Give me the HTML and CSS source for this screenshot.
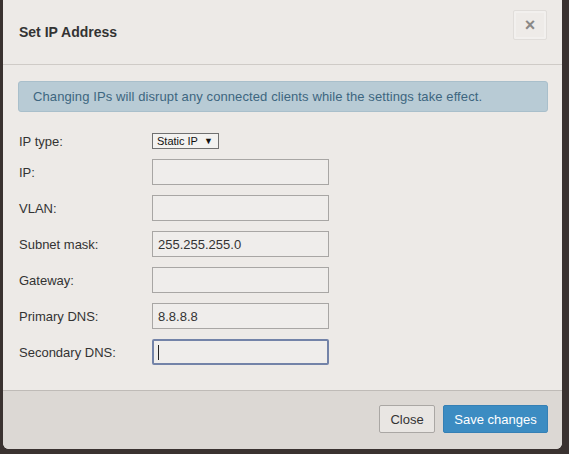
FILE: index.html
```html
<!DOCTYPE html>
<html>
<head>
<meta charset="utf-8">
<link rel="stylesheet" href="styles.css">
</head>
<body>
<div class="modal">
  <div class="modal-header">
    <h3 class="title">Set IP Address</h3>
    <button class="close-x">×</button>
  </div>
  <div class="modal-body">
    <div class="alert">Changing IPs will disrupt any connected clients while the settings take effect.</div>
    <div class="form">
      <label class="lbl">IP type:</label>
      <div class="ctl"><span class="select">Static IP <span class="arrow">▼</span></span></div>
      <label class="lbl">IP:</label>
      <div class="ctl"><span class="input"></span></div>
      <label class="lbl">VLAN:</label>
      <div class="ctl"><span class="input"></span></div>
      <label class="lbl">Subnet mask:</label>
      <div class="ctl"><span class="input">255.255.255.0</span></div>
      <label class="lbl">Gateway:</label>
      <div class="ctl"><span class="input"></span></div>
      <label class="lbl">Primary DNS:</label>
      <div class="ctl"><span class="input">8.8.8.8</span></div>
      <label class="lbl">Secondary DNS:</label>
      <div class="ctl"><span class="input focus"><span class="caret"></span></span></div>
    </div>
  </div>
  <div class="modal-footer">
    <button class="btn btn-default">Close</button>
    <button class="btn btn-primary">Save changes</button>
  </div>
</div>
</body>
</html>
```

FILE: styles.css
```css
html, body {
  margin: 0;
  padding: 0;
  background: #3a3230;
  height: 454px;
  overflow: hidden;
}
body {
  font-family: "Liberation Sans", Arial, sans-serif;
  color: #333;
  font-size: 13px;
}
.modal {
  margin-left: 3px;
  width: 559px;
  height: 449px;
  background: #edeae7;
  border-radius: 0 0 6px 6px;
  display: flex;
  flex-direction: column;
  overflow: hidden;
}
.modal-header {
  height: 65px;
  box-sizing: border-box;
  border-bottom: 1px solid #cfcbc7;
  display: flex;
  align-items: center;
  justify-content: space-between;
  padding: 0 15px 0 16px;
  position: relative;
}
.title {
  margin: 0;
  font-size: 14px;
  font-weight: bold;
  color: #333;
}
.close-x {
  position: absolute;
  left: 510px;
  top: 10px;
  width: 34px;
  height: 30px;
  border: 1px solid #e0ddda;
  border-radius: 2px;
  background: #eeebe8;
  box-shadow: inset 0 0 0 2px #f2f0ee;
  color: #8a8886;
  font-family: "Liberation Sans", Arial, sans-serif;
  font-size: 18px;
  font-weight: bold;
  line-height: 26px;
  padding: 0;
}
.modal-body {
  flex: 1;
  padding: 16px 14px 0 16px;
}
.alert {
  box-sizing: border-box;
  height: 31px;
  margin-left: -1px;
  background: #b8cbd5;
  border: 1px solid #a9bfcb;
  border-radius: 3px;
  color: #3d6680;
  font-size: 13px;
  line-height: 29px;
  padding-left: 14px;
  letter-spacing: 0.1px;
}
.form {
  margin-top: 21px;
  display: grid;
  grid-template-columns: 133px 177px;
  row-gap: 10px;
  align-items: center;
}
.lbl {
  font-size: 13px;
  color: #333;
}
.ctl {
  display: flex;
}
.select {
  box-sizing: border-box;
  display: inline-flex;
  align-items: center;
  height: 16px;
  width: 67px;
  border: 1px solid #707070;
  background: #f3f2f0;
  font-size: 11px;
  padding-left: 4px;
  color: #111;
}
.arrow {
  font-size: 9px;
  margin-left: 6px;
}
.input {
  box-sizing: border-box;
  display: flex;
  align-items: center;
  width: 177px;
  height: 26px;
  border: 1px solid #a8a6a4;
  background: #efedeb;
  padding-left: 5px;
  font-size: 13px;
  color: #333;
}
.input.focus {
  border: 2px solid #7383a8;
  border-radius: 2px;
  padding-left: 4px;
}
.caret {
  display: block;
  width: 1px;
  height: 15px;
  background: #222;
}
.modal-footer {
  height: 59px;
  box-sizing: border-box;
  border-top: 1px solid #bfbbb7;
  background: #dcd8d4;
  display: flex;
  justify-content: flex-end;
  align-items: flex-start;
  padding: 14px 14px 0 0;
  gap: 8px;
}
.btn {
  box-sizing: border-box;
  height: 28px;
  border-radius: 2px;
  font-family: "Liberation Sans", Arial, sans-serif;
  font-size: 13px;
  padding: 0;
}
.btn-default {
  width: 56px;
  border: 1px solid #aaa7a4;
  background: #e9e6e3;
  color: #333;
}
.btn-primary {
  width: 105px;
  border: 1px solid #3580b5;
  background: #3c8cc2;
  color: #fff;
}
```
